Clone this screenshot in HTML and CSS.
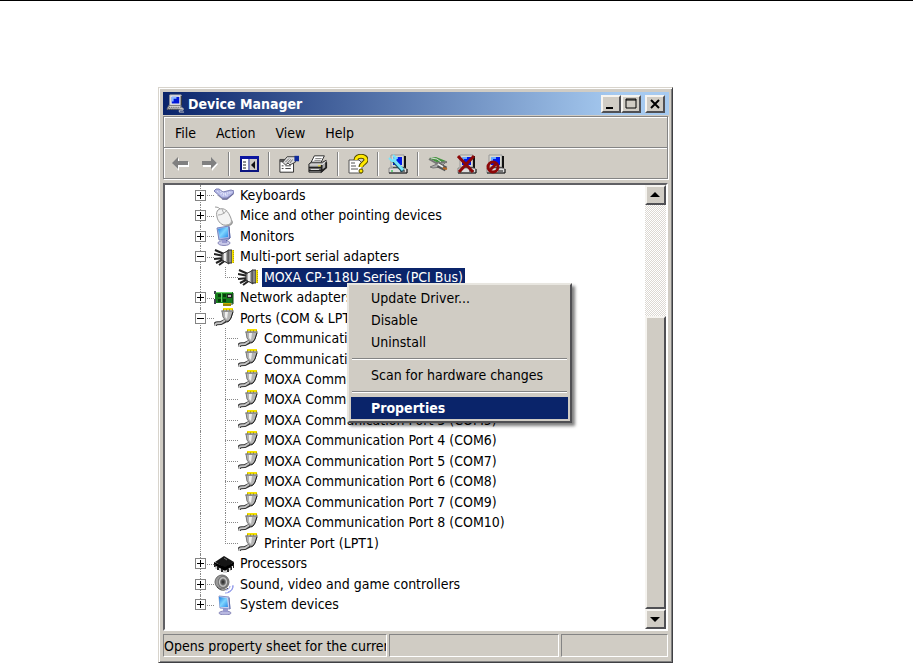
FILE: index.html
```html
<!DOCTYPE html>
<html lang="en">
<head>
<meta charset="utf-8">
<title>Device Manager</title>
<link rel="stylesheet" href="styles.css">
</head>
<body>
<svg class="sprites" aria-hidden="true">
  <defs>
    <linearGradient id="screen" x1="0" y1="0" x2="1" y2="1"><stop offset="0" stop-color="#1c7fe0"/><stop offset=".5" stop-color="#7fd6ff"/><stop offset="1" stop-color="#2a8ae8"/></linearGradient>
    <radialGradient id="cone"><stop offset="0" stop-color="#222"/><stop offset=".45" stop-color="#666"/><stop offset=".7" stop-color="#ccc"/><stop offset="1" stop-color="#555"/></radialGradient>
    <symbol id="keyboard" viewBox="0 0 20 20">
      <path d="M3 10 9 15 13 15 20 9 20 7Z" fill="#9a9aa8"/><path d="M0 6 2 4 5 4 9 7 17 5 20 6 19 9 13 13 8 13Z" fill="#b4b8e6" stroke="#7d80b4"/><path d="M3 6l6 5 9-4M6 6l7 4M9 9l7-2M7 8l7 3" fill="none" stroke="#eef0ff" stroke-dasharray="1 1"/><path d="M8 14l5 0 6-5" fill="none" stroke="#6c6ca0"/>
    </symbol>
    <symbol id="mouse" viewBox="0 0 20 20">
      <path d="M1 1c3 0 5 1 6 4" fill="none" stroke="#999"/><path d="M6 19c7 2 12-1 12-5l1 2c0 3-4 5-9 4Z" fill="#999"/><path d="M4 4c4-3 9-1 12 6 3 6 1 8-3 9-5 1-9-3-10-8-1-4 0-6 1-7Z" fill="#f4f4f4" stroke="#999"/><path d="M4 9c4 0 7-2 9-5M8 3l2 5" fill="none" stroke="#aaa"/>
    </symbol>
    <symbol id="monitor" viewBox="0 0 20 20">
      <ellipse cx="10" cy="17" rx="6" ry="2.500" fill="#c8c8e8" stroke="#8888b8"/><path d="M8 12h5v5H8z" fill="#9a9ad0"/><path d="M3 2 15 0 16 12 5 14Z" fill="#aab6e8" stroke="#7686bc"/><path d="M4 3 14 1 14 11 6 12Z" fill="url(#screen)"/><path d="M15 1l1 11-4 3" fill="none" stroke="#555ea0"/>
    </symbol>
    <symbol id="serial" viewBox="0 0 20 20">
      <path d="M1 3 10 7M0 7l10 2M0 12l10-1M2 16l8-4M5 18l7-5" stroke="#222" stroke-width="2" fill="none"/><path d="M8 7 15 3v14L8 13Z" fill="#aaa" stroke="#333"/><path d="M11 6v8" stroke="#eee" stroke-width="2"/><path d="M14 3h4v13h-4z" fill="#888" stroke="#333"/><path d="M18 3h2v13h-2z" fill="#f4e000"/><path d="M20 3v13" stroke="#786e00" stroke-dasharray="1 1"/>
    </symbol>
    <symbol id="network" viewBox="0 0 20 20">
      <path d="M1 4h18v11H1z" fill="#167c1c"/><path d="M0 3h2v3H0zM0 11h2v5H0z" fill="#445"/><path d="M4 6h3v3H4zM9 6h3v3H9zM4 11h3v3H4zM9 11h3v3H9z" fill="#073c0a"/><path d="M7 5h1v9H7zM2 4h16v1H2z" fill="#67d268"/><path d="M13 6h5v4h-5z" fill="#222"/><path d="M14 7h3v2h-3z" fill="#bbb"/><path d="M9 15h8v3H9z" fill="#c8b000"/><path d="M9 17h8" stroke="#665800"/><path d="M19 5v11h-2" fill="none" stroke="#0a3a10"/>
    </symbol>
    <symbol id="port" viewBox="0 0 20 20">
      <path d="M1 18c0-3 2-3 6-3l6-3" fill="none" stroke="#333" stroke-width="4"/><path d="M1 18c0-3 2-3 6-3l6-4" fill="none" stroke="#c4c4c4" stroke-width="2"/><path d="M8 3h11l-2 7-2 3h-3l-3-4Z" fill="#b4b4b4" stroke="#777"/><path d="M11 4h3l-1 7-2-2Z" fill="#eee"/><path d="M19 4l-2 6-2 3-2 1" fill="none" stroke="#222"/><path d="M7 3h13" stroke="#888"/><path d="M9 1h10" stroke="#f4e000" stroke-width="2"/><path d="M9 2h10" stroke="#857b00" stroke-dasharray="1 2"/>
    </symbol>
    <symbol id="chip" viewBox="0 0 20 20">
      <path d="M1 8 10 2 20 8 11 14Z" fill="#151515"/><path d="M0 8v3l11 6 9-6V8l-9 5Z" fill="#000"/><path d="M1 10v3M4 13v3M8 15v3M14 15v3M17 13v3M20 10v4" stroke="#222" stroke-width="2"/><path d="M2 12v3M6 14v3M10 16v3M12 16v3M16 14v3" stroke="#aaa"/><path d="M10 4l3 2" stroke="#777"/>
    </symbol>
    <symbol id="speaker" viewBox="0 0 20 20">
      <ellipse cx="8" cy="8" rx="7" ry="7" fill="#999" stroke="#666"/><ellipse cx="9" cy="8" rx="5" ry="6" fill="url(#cone)"/><path d="M3 13c3 4 8 4 11 1" fill="none" stroke="#444"/><path d="M12 16c2 0 4-2 4-4M14 18c3-1 5-3 5-7M11 19c4 0 8-2 8-7" fill="none" stroke="#8f98ea"/>
    </symbol>
    <symbol id="system" viewBox="0 0 20 20">
      <ellipse cx="11" cy="18" rx="6" ry="2" fill="#b8b8e0" stroke="#8888b8"/><path d="M9 13h5v4H9z" fill="#9a9ad0"/><path d="M5 1 15 2 16 14 6 13Z" fill="#c8d0f0" stroke="#8a96c8"/><path d="M5 2 13 3 14 12 6 12Z" fill="url(#screen)"/><path d="M15 3l1 11" stroke="#6670a8"/>
    </symbol>
    <symbol id="computer" viewBox="0 0 20 20">
      <path d="M3 1h13v12H3z" fill="#d8d8d0" stroke="#999"/><path d="M5 3h9v8H5z" fill="#0018e8"/><path d="M5 3h5v2H7v3H5z" fill="#68a8ff"/><path d="M17 2v12H5" fill="none" stroke="#111" stroke-width="2"/><path d="M1 14h15l3 1v4H1z" fill="#ddd" stroke="#888"/><path d="M1 19h18v-4M12 17h5" fill="none" stroke="#111"/><path d="M3 17h2" stroke="#0b2"/>
    </symbol>
    <symbol id="title-icon" viewBox="0 0 20 20">
      <path d="M4 1h12v11H4z" fill="#eee" stroke="#aaa"/><path d="M6 3h8v7H6z" fill="#0018d8"/><path d="M6 3h5v2H8v3H6z" fill="#88b8ff"/><path d="M16 2v10" stroke="#111"/><path d="M3 12h12l3 4H1z" fill="#ddd" stroke="#777"/><path d="M3 14h13M2 16h14" stroke="#333" stroke-dasharray="1 1"/><path d="M14 15h4v2h-4v2h5" fill="none" stroke="#ccc"/>
    </symbol>
    <symbol id="arrow-left" viewBox="0 0 20 20"><path d="M3 10 9 4v4h10v5H9v4Z" fill="#fff"/><path d="M2 9 8 3v4h10v4H8v4Z" fill="#808080"/></symbol>
    <symbol id="arrow-right" viewBox="0 0 20 20"><path d="M19 10l-6-6v4H4v5h9v4Z" fill="#fff"/><path d="M18 9l-6-6v4H3v4h9v4Z" fill="#808080"/></symbol>
    <symbol id="pane" viewBox="0 0 20 20"><path d="M2 3h17v14H2z" fill="#fff"/><path d="M11 5h7v12h-7z" fill="#d0ccc4"/><path d="M2 3h17v14H2z" fill="none" stroke="#0a1480" stroke-width="2"/><path d="M1 2h19v3H1z" fill="#0a14a0"/><path d="M10 5v12" stroke="#0a1480"/><path d="M4 8h4M4 11h4M4 14h4" stroke="#222" stroke-width="1" stroke-dasharray="3 1"/><path d="M16 7v8l-4-4Z" fill="#111"/></symbol>
    <symbol id="properties" viewBox="0 0 22 20"><path d="M1 5h15v14H1z" fill="#fff" stroke="#222"/><path d="M1 5h15v3H1z" fill="#555"/><path d="M3 12h2M7 12h6M3 15h2M7 15h6" stroke="#333"/><path d="M4 8 9 2h9v6l-6 3-2-2-3 2Z" fill="#ddd" stroke="#333"/><path d="M7 8l4-4M9 9l4-4M12 9l3-4" stroke="#666"/><path d="M17 1h5v6h-5z" fill="#102b9b"/></symbol>
    <symbol id="printer" viewBox="0 0 22 20"><path d="M7 1h11l-4 8H3Z" fill="#fff" stroke="#222"/><path d="M8 4h7M7 6h7" stroke="#777"/><path d="M1 10 4 8h12l4-2v8l-5 5H1z" fill="#aaa" stroke="#222"/><path d="M2 11h13l5-4" fill="none" stroke="#eee"/><path d="M1 14h14M1 17h14M15 11v7l5-4V8" fill="none" stroke="#222" stroke-width="2"/><path d="M3 16h9" stroke="#eee"/><path d="M11 12h3" stroke="#f4e000" stroke-width="1"/></symbol>
    <symbol id="help" viewBox="0 0 20 20"><path d="M1 6h10l3 3v10H1z" fill="#fff" stroke="#555"/><path d="M3 9h4M3 12h5M3 15h7" stroke="#555"/><path d="M8 6c0-5 10-5 10 0 0 3-5 3-5 7" fill="none" stroke="#554c00" stroke-width="5"/><path d="M8 6c0-5 10-5 10 0 0 3-5 3-5 7" fill="none" stroke="#ffe800" stroke-width="3"/><circle cx="13" cy="17" r="2" fill="#ffe800" stroke="#554c00"/></symbol>
    <symbol id="scan" viewBox="0 0 20 20"><use href="#computer"/><path d="M5 6l10 11" stroke="#104858" stroke-width="4"/><path d="M5 5l10 11" stroke="#78e4f8" stroke-width="3"/><path d="M1 4l3 3h3l1-3-3-3" fill="none" stroke="#78e4f8" stroke-width="2"/></symbol>
    <symbol id="update" viewBox="0 0 20 20"><path d="M1 4 8 3l10 4-4 3-6-2Z" fill="#44943e"/><path d="M1 5l7 4 11-1" fill="none" stroke="#777" stroke-width="2"/><path d="M3 4l6 1 4 3" fill="none" stroke="#ddd"/><path d="M2 13 9 10l9-2-5 5-8 1Z" fill="#aaa" stroke="#777"/><path d="M10 11l8 4" stroke="#555" stroke-width="5"/><path d="M10 10l5 3" stroke="#eee" stroke-width="2"/><path d="M15 14l4 1" stroke="#b86924" stroke-width="2"/></symbol>
    <symbol id="uninstall" viewBox="0 0 20 20"><use href="#computer"/><path d="M1 2l15 16M17 2 2 18" stroke="#8c0808" stroke-width="3"/></symbol>
    <symbol id="disable" viewBox="0 0 20 20"><use href="#computer"/><circle cx="7" cy="13" r="5" fill="none" stroke="#8c0808" stroke-width="3"/><path d="M3 17l8-8" stroke="#8c0808" stroke-width="3"/></symbol>
  </defs>
</svg>

<main class="page">
  <section class="window" aria-label="Device Manager">
    <header class="titlebar">
      <svg class="title-icon"><use href="#title-icon"/></svg>
      <h1>Device Manager</h1>
      <div class="window-buttons">
        <button class="bevel" aria-label="Minimize"><svg viewBox="0 0 16 14"><path d="M3 11h7" stroke="#000" stroke-width="2"/></svg></button>
        <button class="bevel" aria-label="Maximize"><svg viewBox="0 0 16 14"><path d="M3 2h10v9H3zM3 3h10" fill="none" stroke="#000"/></svg></button>
        <button class="bevel close" aria-label="Close"><svg viewBox="0 0 16 14"><path d="M4 3l8 8M12 3l-8 8" stroke="#000" stroke-width="2"/></svg></button>
      </div>
    </header>

    <div class="bars">
      <nav class="menubar">
        <button>File</button><button>Action</button><button>View</button><button>Help</button>
      </nav>
      <div class="toolbar" role="toolbar" aria-label="Standard">
        <button aria-label="Back"><svg><use href="#arrow-left"/></svg></button>
        <button aria-label="Forward"><svg><use href="#arrow-right"/></svg></button>
        <span class="divider"></span>
        <button aria-label="Console tree"><svg><use href="#pane"/></svg></button>
        <span class="divider"></span>
        <button aria-label="Properties"><svg><use href="#properties"/></svg></button>
        <button aria-label="Print"><svg><use href="#printer"/></svg></button>
        <span class="divider"></span>
        <button aria-label="Help"><svg><use href="#help"/></svg></button>
        <span class="divider"></span>
        <button aria-label="Scan for hardware changes"><svg><use href="#scan"/></svg></button>
        <span class="divider"></span>
        <button aria-label="Update driver"><svg><use href="#update"/></svg></button>
        <button aria-label="Uninstall"><svg><use href="#uninstall"/></svg></button>
        <button aria-label="Disable"><svg><use href="#disable"/></svg></button>
      </div>
    </div>

    <div class="pane">
      <ul class="tree">
        <li class="row"><button class="toggle plus" aria-label="Expand"></button><svg><use href="#keyboard"/></svg><span class="label">Keyboards</span></li>
        <li class="row"><button class="toggle plus" aria-label="Expand"></button><svg><use href="#mouse"/></svg><span class="label">Mice and other pointing devices</span></li>
        <li class="row"><button class="toggle plus" aria-label="Expand"></button><svg><use href="#monitor"/></svg><span class="label">Monitors</span></li>
        <li class="row"><button class="toggle" aria-label="Collapse"></button><svg><use href="#serial"/></svg><span class="label">Multi-port serial adapters</span></li>
        <li class="row child last"><svg><use href="#serial"/></svg><span class="label selected">MOXA CP-118U Series (PCI Bus)</span>
          <div class="context-menu" role="menu">
            <button role="menuitem">Update Driver...</button>
            <button role="menuitem">Disable</button>
            <button role="menuitem">Uninstall</button>
            <hr>
            <button role="menuitem">Scan for hardware changes</button>
            <hr>
            <button role="menuitem" class="active">Properties</button>
          </div>
        </li>
        <li class="row"><button class="toggle plus" aria-label="Expand"></button><svg><use href="#network"/></svg><span class="label">Network adapters</span></li>
        <li class="row"><button class="toggle" aria-label="Collapse"></button><svg><use href="#port"/></svg><span class="label">Ports (COM &amp; LPT)</span></li>
        <li class="row child"><svg><use href="#port"/></svg><span class="label">Communications Port (COM1)</span></li>
        <li class="row child"><svg><use href="#port"/></svg><span class="label">Communications Port (COM2)</span></li>
        <li class="row child"><svg><use href="#port"/></svg><span class="label">MOXA Communication Port 1 (COM3)</span></li>
        <li class="row child"><svg><use href="#port"/></svg><span class="label">MOXA Communication Port 2 (COM4)</span></li>
        <li class="row child"><svg><use href="#port"/></svg><span class="label">MOXA Communication Port 3 (COM5)</span></li>
        <li class="row child"><svg><use href="#port"/></svg><span class="label">MOXA Communication Port 4 (COM6)</span></li>
        <li class="row child"><svg><use href="#port"/></svg><span class="label">MOXA Communication Port 5 (COM7)</span></li>
        <li class="row child"><svg><use href="#port"/></svg><span class="label">MOXA Communication Port 6 (COM8)</span></li>
        <li class="row child"><svg><use href="#port"/></svg><span class="label">MOXA Communication Port 7 (COM9)</span></li>
        <li class="row child"><svg><use href="#port"/></svg><span class="label">MOXA Communication Port 8 (COM10)</span></li>
        <li class="row child last"><svg><use href="#port"/></svg><span class="label">Printer Port (LPT1)</span></li>
        <li class="row"><button class="toggle plus" aria-label="Expand"></button><svg><use href="#chip"/></svg><span class="label">Processors</span></li>
        <li class="row"><button class="toggle plus" aria-label="Expand"></button><svg><use href="#speaker"/></svg><span class="label">Sound, video and game controllers</span></li>
        <li class="row end"><button class="toggle plus" aria-label="Expand"></button><svg><use href="#system"/></svg><span class="label">System devices</span></li>
      </ul>
      <div class="scrollbar">
        <button class="bevel" aria-label="Scroll up"><svg viewBox="0 0 16 16"><path d="M3 10 8 5l5 5Z"/></svg></button>
        <div class="track"></div>
        <div class="thumb bevel"></div>
        <button class="bevel" aria-label="Scroll down"><svg viewBox="0 0 16 16"><path d="M3 6h10l-5 5Z"/></svg></button>
      </div>
    </div>

    <footer class="statusbar">
      <span>Opens property sheet for the current selection.</span><span></span><span></span>
    </footer>
  </section>
</main>
</body>
</html>
```
FILE: styles.css
```css
* { box-sizing: border-box; }

body {
  margin: 0;
  background: #fff;
  color: #000;
  font: 14px/18px "DejaVu Sans Condensed", Tahoma, "DejaVu Sans", sans-serif;
}

button {
  margin: 0;
  padding: 0;
  border: 0;
  background: none;
  color: inherit;
  font: inherit;
}

svg { display: block; overflow: visible; }
.sprites { position: absolute; width: 0; height: 0; }

.page {
  border-top: 1px solid #000;
  padding: 86px 240px 0 158px;
}

.window {
  padding: 3px;
  border: 1px solid;
  border-color: #d8d4cc #404044 #404044 #d8d4cc;
  box-shadow: inset 1px 1px #fff, inset -1px -1px #808080;
  background: #d0ccc4;
}

.bevel {
  border: 2px solid;
  border-color: #f6f4f0 #505054 #505054 #f6f4f0;
  background: #d0ccc4;
}

.titlebar {
  display: flex;
  align-items: center;
  height: 23px;
  margin: 1px 0 0 1px;
  padding: 0 4px 0 3px;
  background: linear-gradient(to right, #0a246a, #a6caf0 90%);
}
.title-icon { width: 19px; height: 19px; }
.titlebar h1 {
  flex: 1;
  margin: 0 0 0 3px;
  color: #fff;
  font-size: 14px;
  font-weight: bold;
}
.window-buttons { display: flex; }
.window-buttons button { width: 20px; height: 18px; }
.window-buttons .close { margin-left: 4px; }
.window-buttons svg { width: 16px; height: 14px; }

.bars {
  margin: 1px 1px 4px;
  border: 1px solid #848484;
  box-shadow: inset 1px 1px #fff, 1px 1px #fff;
}
.menubar {
  display: flex;
  gap: 20px;
  height: 31px;
  padding: 2px 11px 0;
  border-bottom: 1px solid #848484;
}
.toolbar {
  display: flex;
  align-items: center;
  gap: 9px;
  height: 30px;
  padding: 0 6px;
  border-top: 1px solid #fff;
}
.toolbar svg { width: 20px; height: 20px; }
.divider {
  width: 2px;
  height: 24px;
  border-left: 1px solid #848484;
  border-right: 1px solid #fff;
}

.pane {
  display: flex;
  height: 448px;
  margin: 0 1px;
  border: 2px solid;
  border-color: #606064 #fff #fff #606064;
  background: #fff;
}
.tree {
  display: grid;
  flex: 1;
  grid-auto-rows: 1fr;
  margin: 0;
  padding: 0 0 14px 30px;
  list-style: none;
}
.row {
  position: relative;
  display: flex;
  align-items: center;
  min-height: 0;
  white-space: nowrap;
}
.row > svg { flex: none; width: 20px; height: 20px; margin-left: 8px; }
.row.child > svg { margin-left: 43px; }
.label { margin-left: 4px; padding: 0 2px; line-height: 19px; }
.selected { background: #0a246a; color: #fff; }

.toggle {
  z-index: 1;
  flex: none;
  width: 11px;
  height: 11px;
  border: 1px solid #848484;
  background: linear-gradient(#000, #000) center / 7px 1px no-repeat #fff;
}
.plus {
  background:
    linear-gradient(#000, #000) center / 7px 1px no-repeat,
    linear-gradient(#000, #000) center / 1px 7px no-repeat #fff;
}

/* Dotted guide lines: the trunk, and each row's branch. */
.row::before {
  content: "";
  position: absolute;
  top: 0;
  bottom: 0;
  left: 5px;
  border-left: 1px dotted #888;
}
.row.end::before { bottom: 50%; }
.row::after {
  content: "";
  position: absolute;
  top: 50%;
  left: 12px;
  width: 7px;
  border-top: 1px dotted #888;
}
.row.child::after {
  top: 0;
  left: 30px;
  width: 13px;
  height: 100%;
  border: 0;
  background:
    repeating-linear-gradient(#888 0 1px, transparent 1px 2px) left top / 1px 100% no-repeat,
    repeating-linear-gradient(to right, #888 0 1px, transparent 1px 2px) left center / 100% 1px no-repeat;
}
.row.child.last::after {
  background:
    repeating-linear-gradient(#888 0 1px, transparent 1px 2px) left top / 1px 50% no-repeat,
    repeating-linear-gradient(to right, #888 0 1px, transparent 1px 2px) left center / 100% 1px no-repeat;
}

.context-menu {
  position: absolute;
  z-index: 5;
  top: 16px;
  left: 152px;
  display: flex;
  flex-direction: column;
  width: 225px;
  padding: 2px;
  border: 2px solid;
  border-color: #e8e6e0 #505054 #505054 #e8e6e0;
  background: #d0ccc4;
  box-shadow: 3px 3px 3px rgba(0, 0, 0, .5);
}
.context-menu button {
  height: 22px;
  padding-left: 20px;
  text-align: left;
}
.context-menu hr {
  width: 215px;
  height: 2px;
  margin: 5px auto 4px;
  border: 0;
  border-top: 1px solid #848484;
  border-bottom: 1px solid #fff;
}
.context-menu .active { background: #0a246a; color: #fff; font-weight: bold; }

.scrollbar { display: flex; flex-direction: column; width: 21px; }
.scrollbar button { height: 20px; }
.scrollbar svg { width: 16px; height: 16px; }
.track {
  flex: 112;
  background: repeating-conic-gradient(#dcd8d2 0 25%, #fff 0 50%) 0 0 / 2px 2px;
}
.thumb { flex: 293; }

.statusbar {
  display: grid;
  grid-template-columns: 21fr 16fr 10fr;
  gap: 2px;
  margin: 3px 1px 2px;
}
.statusbar span {
  height: 23px;
  padding-top: 2px;
  overflow: hidden;
  border: 1px solid;
  border-color: #848484 #fff #fff #848484;
  white-space: nowrap;
}
```
